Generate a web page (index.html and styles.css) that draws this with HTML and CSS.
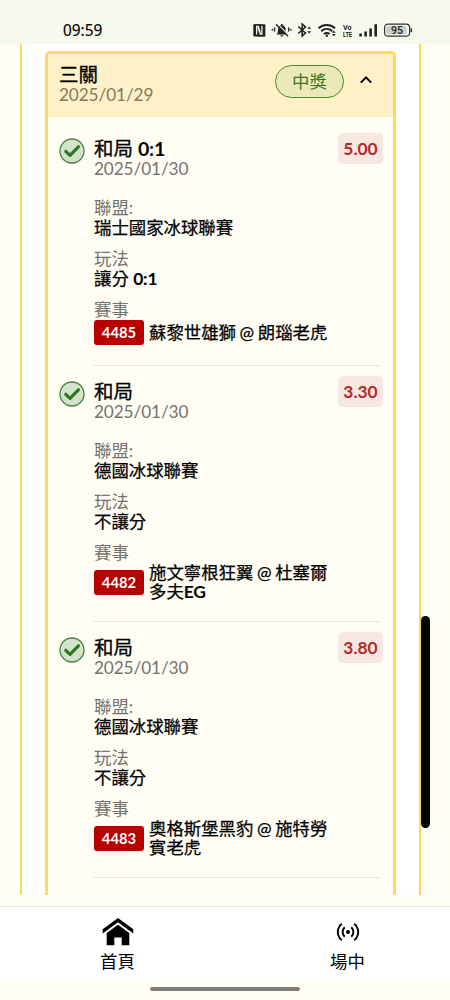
FILE: index.html
```html
<!DOCTYPE html>
<html lang="zh-Hant">
<head>
<meta charset="utf-8">
<title>投注紀錄</title>
<link rel="stylesheet" href="styles.css">
</head>
<body>
<header class="status">
  <span class="time">09:59</span>
  <svg class="status-icons" width="162" height="20" viewBox="0 0 162 20">
    <path d="M1.300 4.200h7.200l1.200 1V13H8.300V6.200M13.200 4.200v12.300H6l-1.200-1V7h1.500v7.500" fill="#222"/>
    <rect x="1.300" y="4.200" width="11.900" height="12.300" rx="1" fill="#222"/>
    <path d="M4.700 14.600V6.400h1.600l2 6.500M9.900 6v8.200H8.300l-2-6.500" fill="none" stroke="#f5faed" stroke-width="1.300"/>
    <path d="M24.500 14.500c1.300-1.300 1.500-2.700 1.500-5 0-2.300 1.200-3.900 3-4.300V4h1.600v1.200c1.800.4 3 2 3 4.300 0 2.300.2 3.700 1.600 5zm3.800.8h3c-.3 1.600-2.700 1.600-3 0z" fill="#222"/>
    <path d="M25.500 3.800 37 15.300" stroke="#f5faed" stroke-width="1.200"/>
    <path d="M24 4.200 36 16.200M22.500 7.500v4M20.300 9v1.500M36.700 7.500v4M38.900 9v1.500" stroke="#222" stroke-width="1.400"/>
    <path d="M46.200 6.500 53.500 13 50.200 16V4l3.300 3-7.300 6.500" fill="none" stroke="#222" stroke-width="1.600"/>
    <path d="m55.300 8.800 1.900-2.300 1.900 2.300zm0 2.400 1.900 2.300 1.900-2.300z" fill="#222"/>
    <g fill="none" stroke="#222" stroke-width="2"><path d="M66.500 8.200c4.900-4.300 11.700-4.300 16.600 0M69.200 11.200c3.300-2.900 7.800-2.900 11.100 0M71.900 14.100c1.800-1.500 3.900-1.500 5.700 0"/></g>
    <circle cx="74.800" cy="15.800" r="1.200" fill="#222"/>
    <path d="m80 12.800 1.800-2.300 1.800 2.300zm0 1.200 1.800 2.300 1.800-2.300z" fill="#222"/>
    <text class="volte" x="91" y="9.600" textLength="8.500" lengthAdjust="spacingAndGlyphs">Vo</text>
    <text class="volte" x="91" y="16.500" textLength="9" lengthAdjust="spacingAndGlyphs">LTE</text>
    <path d="M107.300 13.500h2.600V16.500h-2.600zM112.300 11.500h2.600v5h-2.600zM117.300 8.500h2.600v8h-2.600zM122.400 4.300h2.600v12.200h-2.600z" fill="#222"/>
    <rect x="132.600" y="4.200" width="25" height="12" rx="3.500" fill="#fcfef8" stroke="#333" stroke-width="1.200"/>
    <rect x="134.200" y="5.800" width="20.500" height="8.800" rx="2" fill="#cbd0c7"/>
    <path d="M159.300 8.300v3.800" stroke="#333" stroke-width="1.500"/>
    <text class="battery" x="145" y="13.900" text-anchor="middle">95</text>
  </svg>
</header>

<main class="viewport">
  <section class="panel">
    <article class="ticket">
      <div class="ticket-head">
        <div class="ticket-name">
          <h1 class="title">三關</h1>
          <p class="date">2025/01/29</p>
        </div>
        <span class="won">中獎</span>
        <svg class="chevron" width="14" height="10" viewBox="0 0 14 10"><path d="m1.800 7.600 5.200-5.200 5.200 5.200" fill="none" stroke="#000" stroke-width="2"/></svg>
      </div>

      <div class="leg">
        <svg class="check" width="26" height="26" viewBox="0 0 26 26"><circle cx="13" cy="13" r="12" fill="#d3e3ca" stroke="#4c8049" stroke-width="1.300"/><path d="m6.800 13.300 4.200 4 8.400-8.500" fill="none" stroke="#2e7625" stroke-width="3.200" stroke-linecap="round" stroke-linejoin="round"/></svg>
        <div class="leg-body">
          <div class="leg-top">
            <div><h2 class="title">和局 <b>0:1</b></h2><p class="date">2025/01/30</p></div>
            <span class="odds">5.00</span>
          </div>
          <dl class="facts">
            <dt>聯盟:</dt><dd>瑞士國家冰球聯賽</dd>
            <dt>玩法</dt><dd>讓分 <b>0:1</b></dd>
            <dt>賽事</dt><dd class="match"><span class="code">4485</span><span class="teams">蘇黎世雄獅 @ 朗瑙老虎</span></dd>
          </dl>
        </div>
      </div>

      <div class="leg">
        <svg class="check" width="26" height="26" viewBox="0 0 26 26"><circle cx="13" cy="13" r="12" fill="#d3e3ca" stroke="#4c8049" stroke-width="1.300"/><path d="m6.800 13.300 4.200 4 8.400-8.500" fill="none" stroke="#2e7625" stroke-width="3.200" stroke-linecap="round" stroke-linejoin="round"/></svg>
        <div class="leg-body">
          <div class="leg-top">
            <div><h2 class="title">和局</h2><p class="date">2025/01/30</p></div>
            <span class="odds">3.30</span>
          </div>
          <dl class="facts">
            <dt>聯盟:</dt><dd>德國冰球聯賽</dd>
            <dt>玩法</dt><dd>不讓分</dd>
            <dt>賽事</dt><dd class="match"><span class="code">4482</span><span class="teams">施文寧根狂翼 @ 杜塞爾<br>多夫<b>EG</b></span></dd>
          </dl>
        </div>
      </div>

      <div class="leg">
        <svg class="check" width="26" height="26" viewBox="0 0 26 26"><circle cx="13" cy="13" r="12" fill="#d3e3ca" stroke="#4c8049" stroke-width="1.300"/><path d="m6.800 13.300 4.200 4 8.400-8.500" fill="none" stroke="#2e7625" stroke-width="3.200" stroke-linecap="round" stroke-linejoin="round"/></svg>
        <div class="leg-body">
          <div class="leg-top">
            <div><h2 class="title">和局</h2><p class="date">2025/01/30</p></div>
            <span class="odds">3.80</span>
          </div>
          <dl class="facts">
            <dt>聯盟:</dt><dd>德國冰球聯賽</dd>
            <dt>玩法</dt><dd>不讓分</dd>
            <dt>賽事</dt><dd class="match"><span class="code">4483</span><span class="teams">奧格斯堡黑豹 @ 施特勞<br>賓老虎</span></dd>
          </dl>
        </div>
      </div>
    </article>
  </section>
  <div class="scrollbar"></div>
</main>

<nav class="tabs">
  <a class="tab">
    <svg width="32" height="28" viewBox="0 0 32 28"><path d="M16 0 31.300 11.200v4.300L16 4.300.7 15.500v-4.300z"/><path d="M16 6.800 27.300 15v12.300h-7.600v-7.800h-7.400v7.800H4.700V15z"/></svg>
    <span>首頁</span>
  </a>
  <a class="tab">
    <svg width="32" height="28" viewBox="0 0 32 28"><circle cx="16" cy="14" r="2"/><g fill="none" stroke="#000" stroke-width="1.900"><path d="M12.700 9.300c-2.800 2.700-2.800 6.700 0 9.400M19.300 9.300c2.800 2.700 2.800 6.700 0 9.400M9.700 5.700c-5.200 4.800-5.200 11.800 0 16.600M22.300 5.700c5.200 4.800 5.200 11.800 0 16.600"/></g></svg>
    <span>場中</span>
  </a>
</nav>
<footer class="gesture"><div class="pill"></div></footer>
</body>
</html>
```

FILE: styles.css
```css
* { box-sizing: border-box; }

body {
  margin: 0;
  height: 1000px;
  display: flex;
  flex-direction: column;
  overflow: hidden;
  background: #fffdf4;
  color: #000;
  font: 17.4px/20px Lato, "Noto Sans CJK TC", sans-serif;
}

h1, h2, p, dl, dt, dd { margin: 0; }

b {
  font-weight: 700;
  letter-spacing: -0.2px;
  -webkit-text-stroke: 0;
}

.status {
  height: 44px;
  flex: none;
  display: flex;
  justify-content: space-between;
  padding: 20px 36px 0 63px;
  background: #f5faed;
}

.time {
  font: 15.4px/21px "Noto Sans", sans-serif;
  -webkit-text-stroke: 0.15px #000;
}

.volte { font: bold 7px Roboto, sans-serif; fill: #222; }
.battery { font: 500 10.500px Roboto, sans-serif; fill: #222; }

.viewport {
  position: relative;
  height: 851px;
  flex: none;
  overflow: hidden;
}

.panel {
  height: 870px;
  margin: 0 29px 0 20px;
  padding: 7px 23px 0;
  background: #fff;
  border: solid #f5da5c;
  border-width: 0 2px;
}

.ticket {
  height: 870px;
  background: #fffdf4;
  border: 3px solid #fbda5c;
  border-bottom: 0;
  border-radius: 5px 5px 0 0;
}

.ticket-head {
  display: flex;
  align-items: center;
  height: 63px;
  margin-bottom: 6px;
  padding: 0 20px 0 11px;
  background: #fef1c7;
}

.ticket-name { flex: 1; margin-top: -2px; }

.title {
  font-size: 19.5px;
  font-weight: 400;
  line-height: 21px;
  -webkit-text-stroke: 0.3px #000;
}

.date {
  color: #75736e;
  line-height: 20px;
  font-size: 17.200px;
  letter-spacing: -0.1px;
}

.ticket-head .date { color: #827960; }

.won {
  width: 69px;
  height: 33px;
  margin: -9px 15px 0 0;
  border: 1.500px solid #4e8535;
  border-radius: 17px;
  background: #ece9b8;
  color: #397729;
  line-height: 31px;
  text-align: center;
}

.chevron { margin-top: -12px; }

.leg {
  display: flex;
  padding: 0 13px 0 11px;
}

.check {
  flex: none;
  margin: 15px 9px 0 0;
}

.leg-body {
  flex: 1;
  padding: 15px 0 20px;
  border-bottom: 1px solid #e8e6df;
}

.leg-top {
  display: flex;
  justify-content: space-between;
  align-items: flex-start;
}

.odds {
  width: 45px;
  height: 31px;
  margin: -5px -3px 0 0;
  border-radius: 5px;
  background: #f6e8e1;
  color: #b8292a;
  font-weight: 700;
  line-height: 31px;
  text-align: center;
}

.facts { padding-top: 19px; }

.facts dt { color: #75736e; }

.facts dd {
  margin-bottom: 11px;
  -webkit-text-stroke: 0.25px #000;
}

.facts .match {
  display: flex;
  align-items: center;
  gap: 5px;
  min-height: 25px;
  margin: 0;
}

.code {
  width: 50px;
  height: 25px;
  border-radius: 3px;
  background: #b90000;
  color: #fff;
  font-size: 14.800px;
  font-weight: 700;
  line-height: 25px;
  text-align: center;
  -webkit-text-stroke: 0;
}

.teams {
  line-height: 19px;
  word-spacing: -0.8px;
}

.scrollbar {
  position: absolute;
  left: 421px;
  top: 572px;
  width: 9px;
  height: 212px;
  border-radius: 5px;
  background: #000;
}

.tabs {
  flex: none;
  display: flex;
  justify-content: space-between;
  height: 75px;
  margin-top: 11px;
  padding: 11px 65px 0 80px;
  background: #fff;
  border-top: 1px solid #e3e3e0;
}

.tab {
  display: flex;
  flex-direction: column;
  align-items: center;
  width: 75px;
  gap: 6px;
}

.gesture {
  flex: 1;
  padding-top: 6px;
}

.pill {
  width: 150px;
  height: 4px;
  margin: 0 auto;
  border-radius: 2px;
  background: #7f7f7b;
}
```
